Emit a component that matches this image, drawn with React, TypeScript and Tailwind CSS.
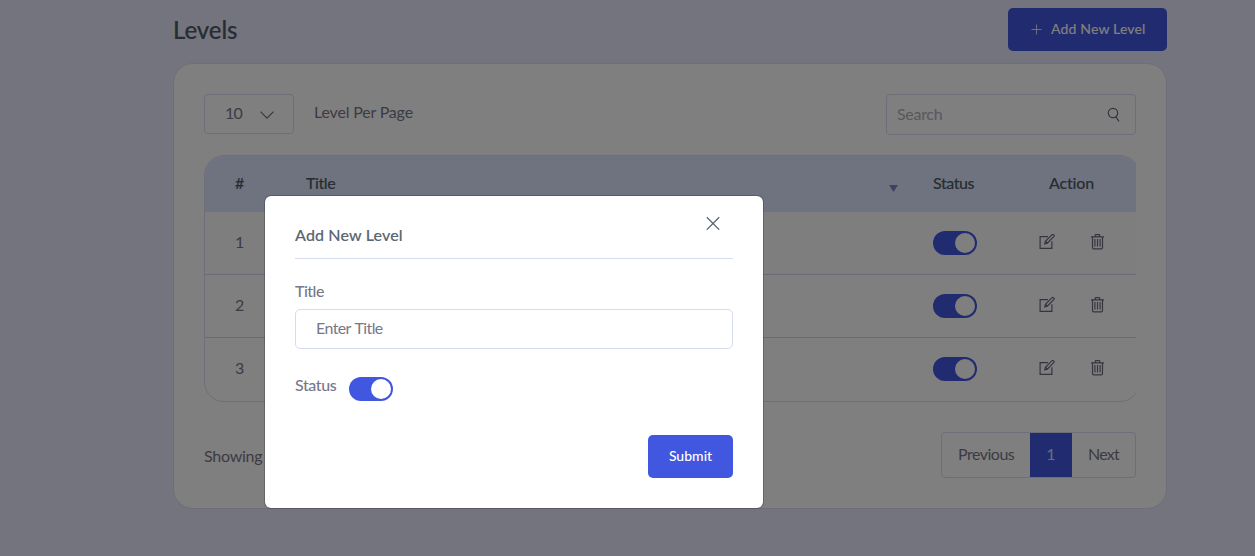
import React from "react";

function Toggle() {
  return (
    <span className="flex h-6 w-11 shrink-0 items-center justify-end rounded-full bg-[#4257df] pr-0.5">
      <span className="size-5 rounded-full bg-white" />
    </span>
  );
}

function EditIcon() {
  return (
    <svg width="16" height="16" viewBox="0 0 16 16" fill="none" stroke="#6a6a7e" strokeWidth="1.2">
      <path d="M9 2.7H1.1V14.4H12.9V7.3" />
      <path d="M5.8 9.9L6.4 7.3L12.8 .9Q13.8 .1 14.8 .9Q15.6 1.8 14.7 2.7L8.3 9.1L5.8 9.9ZM6.5 7.3L8.3 9" />
    </svg>
  );
}

function TrashIcon() {
  return (
    <svg width="13" height="16" viewBox="0 0 13 16" fill="none" stroke="#6a6a7e" strokeWidth="1.2">
      <path d="M0 2.8H13M4.2 2.7V1.4Q4.2 .6 5 .6H8Q8.8 .6 8.8 1.4V2.7M1.5 3V13.4Q1.5 14.8 2.8 14.8H10.2Q11.5 14.8 11.5 13.4V3" />
      <path d="M3.9 5V12.4M6.5 5V12.4M9.1 5V12.4" />
    </svg>
  );
}

const rowClasses = [
  "flex h-[63px] border-b border-[#d3d7ec] bg-[#fdfdff]",
  "flex h-[63px] border-b border-[#d3d7ec]",
  "flex h-[63px] border-b border-transparent",
];

function Row({ index }: { index: number }) {
  return (
    <div className={rowClasses[index]}>
      <div className="flex w-[728px] items-center pb-[3px] pl-[30px] text-[16px] text-[#777789]">{index + 1}</div>
      <div className="flex w-[106px] items-center">
        <Toggle />
      </div>
      <div className="flex items-center gap-[36px] pb-[2px]">
        <EditIcon />
        <TrashIcon />
      </div>
    </div>
  );
}

export default function App() {
  return (
    <div className="relative h-[556px] w-full overflow-hidden bg-[#e9e9ff] font-['Lato',sans-serif] text-[16px] leading-6 text-[#777789]">
      <main className="ml-[173px] w-[994px] pt-2">
        <header className="flex h-[43px] items-center justify-between">
          <h1 className="text-[24px] leading-8 font-medium tracking-[-0.1px] text-[#4f5b66] [-webkit-text-stroke:0.15px]">Levels</h1>
          <button className="flex h-[43px] w-[159px] items-center rounded-[5px] bg-[#4257df] pl-[23px] text-[14px] font-medium text-white">
            <svg width="11" height="11" viewBox="0 0 11 11" fill="none" stroke="white" strokeWidth=".8">
              <path d="M5.5 .5V10.5M.5 5.5H10.5" />
            </svg>
            <span className="ml-[9px] pb-[2px] tracking-[0.15px] whitespace-nowrap">Add New Level</span>
          </button>
        </header>

        <section className="mt-3 h-[446px] rounded-[20px] border border-[#dadcf0] bg-white px-[30px] pt-[30px]">
          <div className="flex items-start justify-between">
            <div className="flex items-center">
              <div className="flex h-10 w-[90px] items-center justify-between rounded-[4px] border border-[#dadcf0] pr-[19px] pl-5 text-[16px]">
                <span className="pb-[3px] tracking-[-0.8px]">10</span>
                <svg width="14" height="8" viewBox="0 0 14 8" className="mt-[1px]" fill="none" stroke="#6b6b7f" strokeWidth="1.1">
                  <path d="M.5 .7L7 7.2L13.5 .7" />
                </svg>
              </div>
              <span className="ml-5 pb-1 tracking-[-0.18px]">Level Per Page</span>
            </div>
            <div className="flex h-[41px] w-[250px] items-center justify-between rounded-[4px] border border-[#dadcf0] pr-[15px] pl-[10px]">
              <span className="pb-px tracking-[-0.3px] text-[#b1b1b8]">Search</span>
              <svg width="13" height="15" viewBox="0 0 13 15" fill="none" stroke="#6b6b7f" strokeWidth="1.2">
                <circle cx="6" cy="6" r="4.7" />
                <path d="M8.6 9.3L12 14.4" />
              </svg>
            </div>
          </div>

          <div className="mt-[20px] w-[932px] overflow-hidden">
            <div className="h-[247px] w-[936px] overflow-hidden rounded-[20px] border border-[#dadcf0]">
              <div className="flex h-[56px] items-center bg-[#dfe7ff] pb-[2px] text-[16px] font-medium text-[#4f5b66] [-webkit-text-stroke:0.12px]">
                <span className="w-[71px] pl-[30px]">#</span>
                <span className="w-[583px] pl-[30px] tracking-[-0.45px]">Title</span>
                <span className="w-[44px] pt-[10px] pl-[30px]">
                  <svg width="9" height="7" viewBox="0 0 9 7" className="overflow-visible" fill="#7c80c8">
                    <path d="M0 0H9L4.5 7Z" />
                  </svg>
                </span>
                <span className="w-[116px] pl-[30px] tracking-[-0.45px]">Status</span>
                <span className="pl-[30px] tracking-[-0.2px]">Action</span>
              </div>
              <Row index={0} />
              <Row index={1} />
              <Row index={2} />
            </div>
          </div>

          <div className="mt-[30px] flex h-[46px] justify-between">
            <span className="pt-[12px] tracking-[-0.25px]">Showing 1 to 3 of 3</span>
            <nav className="flex w-[195px] overflow-hidden rounded-[4px] border border-[#dadcf0] leading-[42px]">
              <span className="w-[88px] pl-4 tracking-[-0.5px]">Previous</span>
              <span className="w-[42px] bg-[#4257df] text-center text-[#d5d9ff]">1</span>
              <span className="pl-4 tracking-[-0.8px]">Next</span>
            </nav>
          </div>
        </section>
      </main>

      <div className="absolute inset-0 bg-black/50 pt-[195px] pl-[264px]">
        <div className="h-[314px] w-[500px] rounded-[7px] border border-black/20 bg-white bg-clip-padding px-[30px]">
          <div className="flex h-[63px] items-start justify-between border-b border-[#d6dbef]">
            <h2 className="pt-[27px] text-[16px] font-medium tracking-[0.15px] text-[#59656f] [-webkit-text-stroke:0.12px]">Add New Level</h2>
            <svg width="14" height="14" viewBox="0 0 14 14" className="mt-[20px] mr-[13px]" fill="none" stroke="#59656f" strokeWidth="1.3">
              <path d="M.8 1.2L13.2 13.6M13.2 1.2L.8 13.6" />
            </svg>
          </div>
          <label className="mt-[20px] block font-medium tracking-[-0.5px]">Title</label>
          <div className="mt-[6px] flex h-10 items-center rounded-[5px] border border-[#d6dbef] pb-[2px] pl-5">
            <span className="tracking-[-0.6px] [word-spacing:1px]">Enter Title</span>
          </div>
          <div className="mt-[24px] flex">
            <span className="w-[54px] font-medium tracking-[-0.4px]">Status</span>
            <span className="mt-[4px]">
              <Toggle />
            </span>
          </div>
          <div className="mt-[34px] flex justify-end">
            <button className="h-[43px] w-[85px] rounded-[5px] bg-[#4257df] pb-[2px] text-[14px] font-medium text-white">Submit</button>
          </div>
        </div>
      </div>
    </div>
  );
}
